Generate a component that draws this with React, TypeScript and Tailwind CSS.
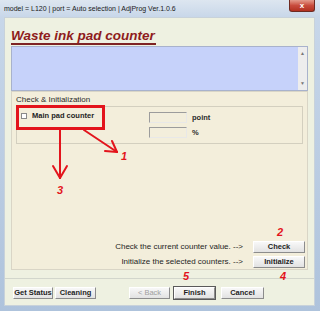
import React from "react";

// classic 3D push button
function Btn({ label, w, disabled, isDefault }: { label: string; w: string; disabled?: boolean; isDefault?: boolean }) {
  return (
    <div
      className={`${w} h-[12px] flex items-center justify-center text-[7.5px] leading-none bg-gradient-to-b from-[#F8F8F8] to-[#E2E2E2] border border-t-[#FFFFFF] border-l-[#FFFFFF] border-r-[#8C8C8C] border-b-[#8C8C8C] ${
        isDefault ? "outline outline-1 outline-[#5A5A5A]" : ""
      } ${disabled ? "text-[#A0A0A0] font-normal" : "text-[#1E1E1E] font-bold"}`}
    >
      {label}
    </div>
  );
}

function Field() {
  return <div className="w-[38px] h-[11px] border border-t-[#9C9C9C] border-l-[#9C9C9C] border-r-[#E8E8E8] border-b-[#E8E8E8] bg-[#F3EEDC]" />;
}

export default function App() {
  return (
    <div className="relative w-[320px] h-[311px] overflow-hidden flex flex-col bg-gradient-to-b from-[#C9D8EA] to-[#AEC3DC] font-['Liberation_Sans',Arial,sans-serif]">
      {/* Title bar */}
      <div className="h-[17px] flex items-start justify-between pl-[4px] pr-[5px] bg-gradient-to-b from-[#DDE6F0] to-[#C8D7E9]">
        <span className="text-[7px] leading-[17px] text-[#1A1A1A]">
          model = L120 | port = Auto selection | AdjProg Ver.1.0.6
        </span>
        <div className="w-[26px] h-[12px] rounded-b-[3px] flex items-center justify-center bg-gradient-to-b from-[#E39A8C] via-[#C84B3D] to-[#B2301F] border border-t-0 border-[#6E2A21]">
          <span className="text-white text-[8px] font-bold leading-none">x</span>
        </div>
      </div>

      {/* Client area */}
      <div className="flex-1 ml-[4px] mr-[5px] mb-[5px] flex flex-col bg-[#EEF1E1] border border-[#C8D2DA]">
        {/* Header */}
        <div className="h-[28px] pl-[6px] pt-[5px]">
          <span className="inline-block text-[13.5px] leading-[15px] font-bold italic text-[#8E1C1C] border-b-2 border-[#7E2323] pr-[1px]">
            Waste ink pad counter
          </span>
        </div>

        {/* Message area */}
        <div className="mx-[6px] h-[45px] flex bg-[#C6D2FA] border border-[#A8B2CC]">
          <div className="flex-1" />
          <div className="w-[9px] bg-[#EDEDED] flex flex-col items-center justify-between py-[4px] text-[5px] leading-none text-[#777]">
            <span>▲</span>
            <span>▼</span>
          </div>
        </div>

        {/* Check & Initialization panel */}
        <div className="mx-[6px] h-[179px] flex flex-col bg-[#F3EEDB] border border-[#D9D5C6]">
          <div className="pl-[4px] pt-[2px] text-[8px] leading-[11px] text-[#2A2A2A]">Check &amp; Initialization</div>
          <div className="mx-[4px] mt-[1px] h-[38px] border border-[#D3CFBF] flex pt-[5px]">
            <div className="w-[132px] flex items-start pl-[4px]">
              <div className="w-[6px] h-[6px] mt-[1px] bg-white border border-[#8A8A8A]" />
              <span className="ml-[5px] text-[7.5px] leading-[8px] font-bold text-[#1E1E1E]">Main pad counter</span>
            </div>
            <div className="flex flex-col gap-[4px]">
              <div className="flex items-center gap-[5px]">
                <Field />
                <span className="text-[7.5px] font-bold text-[#2A2A2A]">point</span>
              </div>
              <div className="flex items-center gap-[5px]">
                <Field />
                <span className="text-[7.5px] font-bold text-[#2A2A2A]">%</span>
              </div>
            </div>
          </div>
          <div className="flex-1" />
          <div className="flex flex-col gap-[3px] pr-[2px] pb-[1px]">
            <div className="flex items-center justify-end gap-[10px]">
              <span className="text-[8px] text-[#1E1E1E]">Check the current counter value. --&gt;</span>
              <Btn label="Check" w="w-[52px]" />
            </div>
            <div className="flex items-center justify-end gap-[10px]">
              <span className="text-[8px] text-[#1E1E1E]">Initialize the selected counters. --&gt;</span>
              <Btn label="Initialize" w="w-[52px]" />
            </div>
          </div>
        </div>

        {/* Divider */}
        <div className="mt-[8px] h-[1px] bg-[#D2D6CC]" />

        {/* Bottom buttons */}
        <div className="flex items-center pl-[8px] mt-[8px]">
          <Btn label="Get Status" w="w-[40px]" />
          <div className="ml-[2px]">
            <Btn label="Cleaning" w="w-[41px]" />
          </div>
          <div className="ml-[33px]">
            <Btn label="< Back" w="w-[41px]" disabled />
          </div>
          <div className="ml-[4px]">
            <Btn label="Finish" w="w-[41px]" isDefault />
          </div>
          <div className="ml-[6px]">
            <Btn label="Cancel" w="w-[43px]" />
          </div>
        </div>
      </div>

      {/* Red annotations */}
      <div className="absolute left-[16px] top-[105px] w-[89px] h-[25px] border-[3px] border-[#E3141C] pointer-events-none" />
      <svg className="absolute inset-0 pointer-events-none" width="320" height="311" viewBox="0 0 320 311">
        <g stroke="#E3141C" strokeWidth="2" fill="none" strokeLinecap="round">
          <line x1="84" y1="130" x2="117" y2="152" />
          <line x1="117" y1="152" x2="105" y2="151" />
          <line x1="117" y1="152" x2="112" y2="141" />
          <line x1="60" y1="130" x2="60" y2="178" />
          <line x1="60" y1="178" x2="53" y2="166" />
          <line x1="60" y1="178" x2="67" y2="166" />
        </g>
      </svg>
      <span className="absolute left-[121px] top-[151px] text-[11px] leading-none font-bold italic text-[#E3141C]">1</span>
      <span className="absolute left-[57px] top-[185px] text-[11px] leading-none font-bold italic text-[#E3141C]">3</span>
      <span className="absolute left-[277px] top-[227px] text-[11px] leading-none font-bold italic text-[#E3141C]">2</span>
      <span className="absolute left-[280px] top-[271px] text-[11px] leading-none font-bold italic text-[#E3141C]">4</span>
      <span className="absolute left-[183px] top-[271px] text-[11px] leading-none font-bold italic text-[#E3141C]">5</span>
    </div>
  );
}
